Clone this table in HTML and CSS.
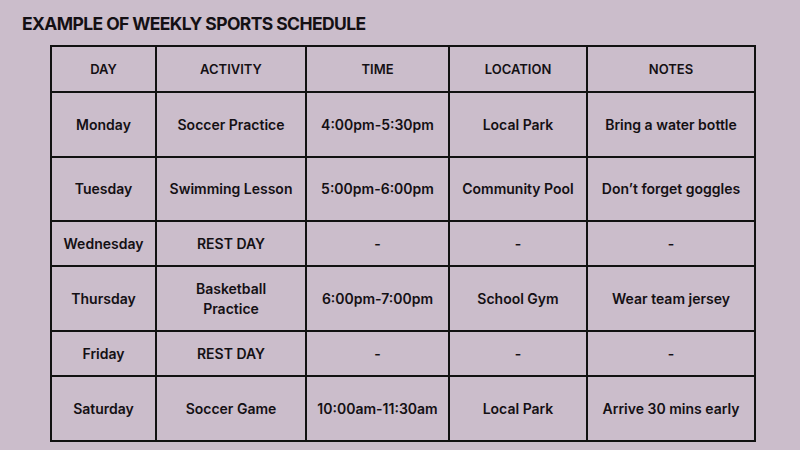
FILE: index.html
```html
<!DOCTYPE html>
<html>
<head>
<meta charset="utf-8">
<link rel="stylesheet" href="styles.css">
</head>
<body>
<div class="page">
  <h1 class="title">EXAMPLE OF WEEKLY SPORTS SCHEDULE</h1>
  <table class="sched">
    <colgroup>
      <col class="c-day"><col class="c-act"><col class="c-time"><col class="c-loc"><col class="c-notes">
    </colgroup>
    <thead>
      <tr class="r-head"><th>DAY</th><th>ACTIVITY</th><th>TIME</th><th>LOCATION</th><th>NOTES</th></tr>
    </thead>
    <tbody>
      <tr class="r-tall"><td>Monday</td><td>Soccer Practice</td><td>4:00pm-5:30pm</td><td>Local Park</td><td>Bring a water bottle</td></tr>
      <tr class="r-mid"><td>Tuesday</td><td>Swimming Lesson</td><td>5:00pm-6:00pm</td><td>Community Pool</td><td>Don’t forget goggles</td></tr>
      <tr class="r-short"><td>Wednesday</td><td>REST DAY</td><td>-</td><td>-</td><td>-</td></tr>
      <tr class="r-tall"><td>Thursday</td><td>Basketball<br>Practice</td><td>6:00pm-7:00pm</td><td>School Gym</td><td>Wear team jersey</td></tr>
      <tr class="r-short"><td>Friday</td><td>REST DAY</td><td>-</td><td>-</td><td>-</td></tr>
      <tr class="r-tall"><td>Saturday</td><td>Soccer Game</td><td>10:00am-11:30am</td><td>Local Park</td><td>Arrive 30 mins early</td></tr>
    </tbody>
  </table>
</div>
</body>
</html>
```
FILE: styles.css
```css
html, body {
  margin: 0;
  padding: 0;
  background: #cbbdcb;
}
body {
  width: 800px;
  height: 450px;
  overflow: hidden;
  font-family: "Inter", "DejaVu Sans", sans-serif;
  color: #141014;
}
.page {
  padding-top: 12px;
}
.title {
  margin: 0 0 9px 22px;
  font-size: 17.5px;
  line-height: 24px;
  font-weight: 700;
  letter-spacing: -0.6px;
}
.sched {
  margin-left: 50px;
  width: 704px;
  table-layout: fixed;
  border-collapse: collapse;
}
.c-day { width: 105px; }
.c-act { width: 150px; }
.c-time { width: 143px; }
.c-loc { width: 138px; }
.c-notes { width: 168px; }
.sched th, .sched td {
  border: 2px solid #111;
  padding: 0;
  text-align: center;
  vertical-align: middle;
  font-size: 14px;
  font-weight: 600;
  line-height: 20px;
}
.sched th {
  font-size: 13px;
}
.r-head { height: 46px; }
.r-tall { height: 65px; }
.r-mid { height: 64px; }
.r-short { height: 45px; }
```
